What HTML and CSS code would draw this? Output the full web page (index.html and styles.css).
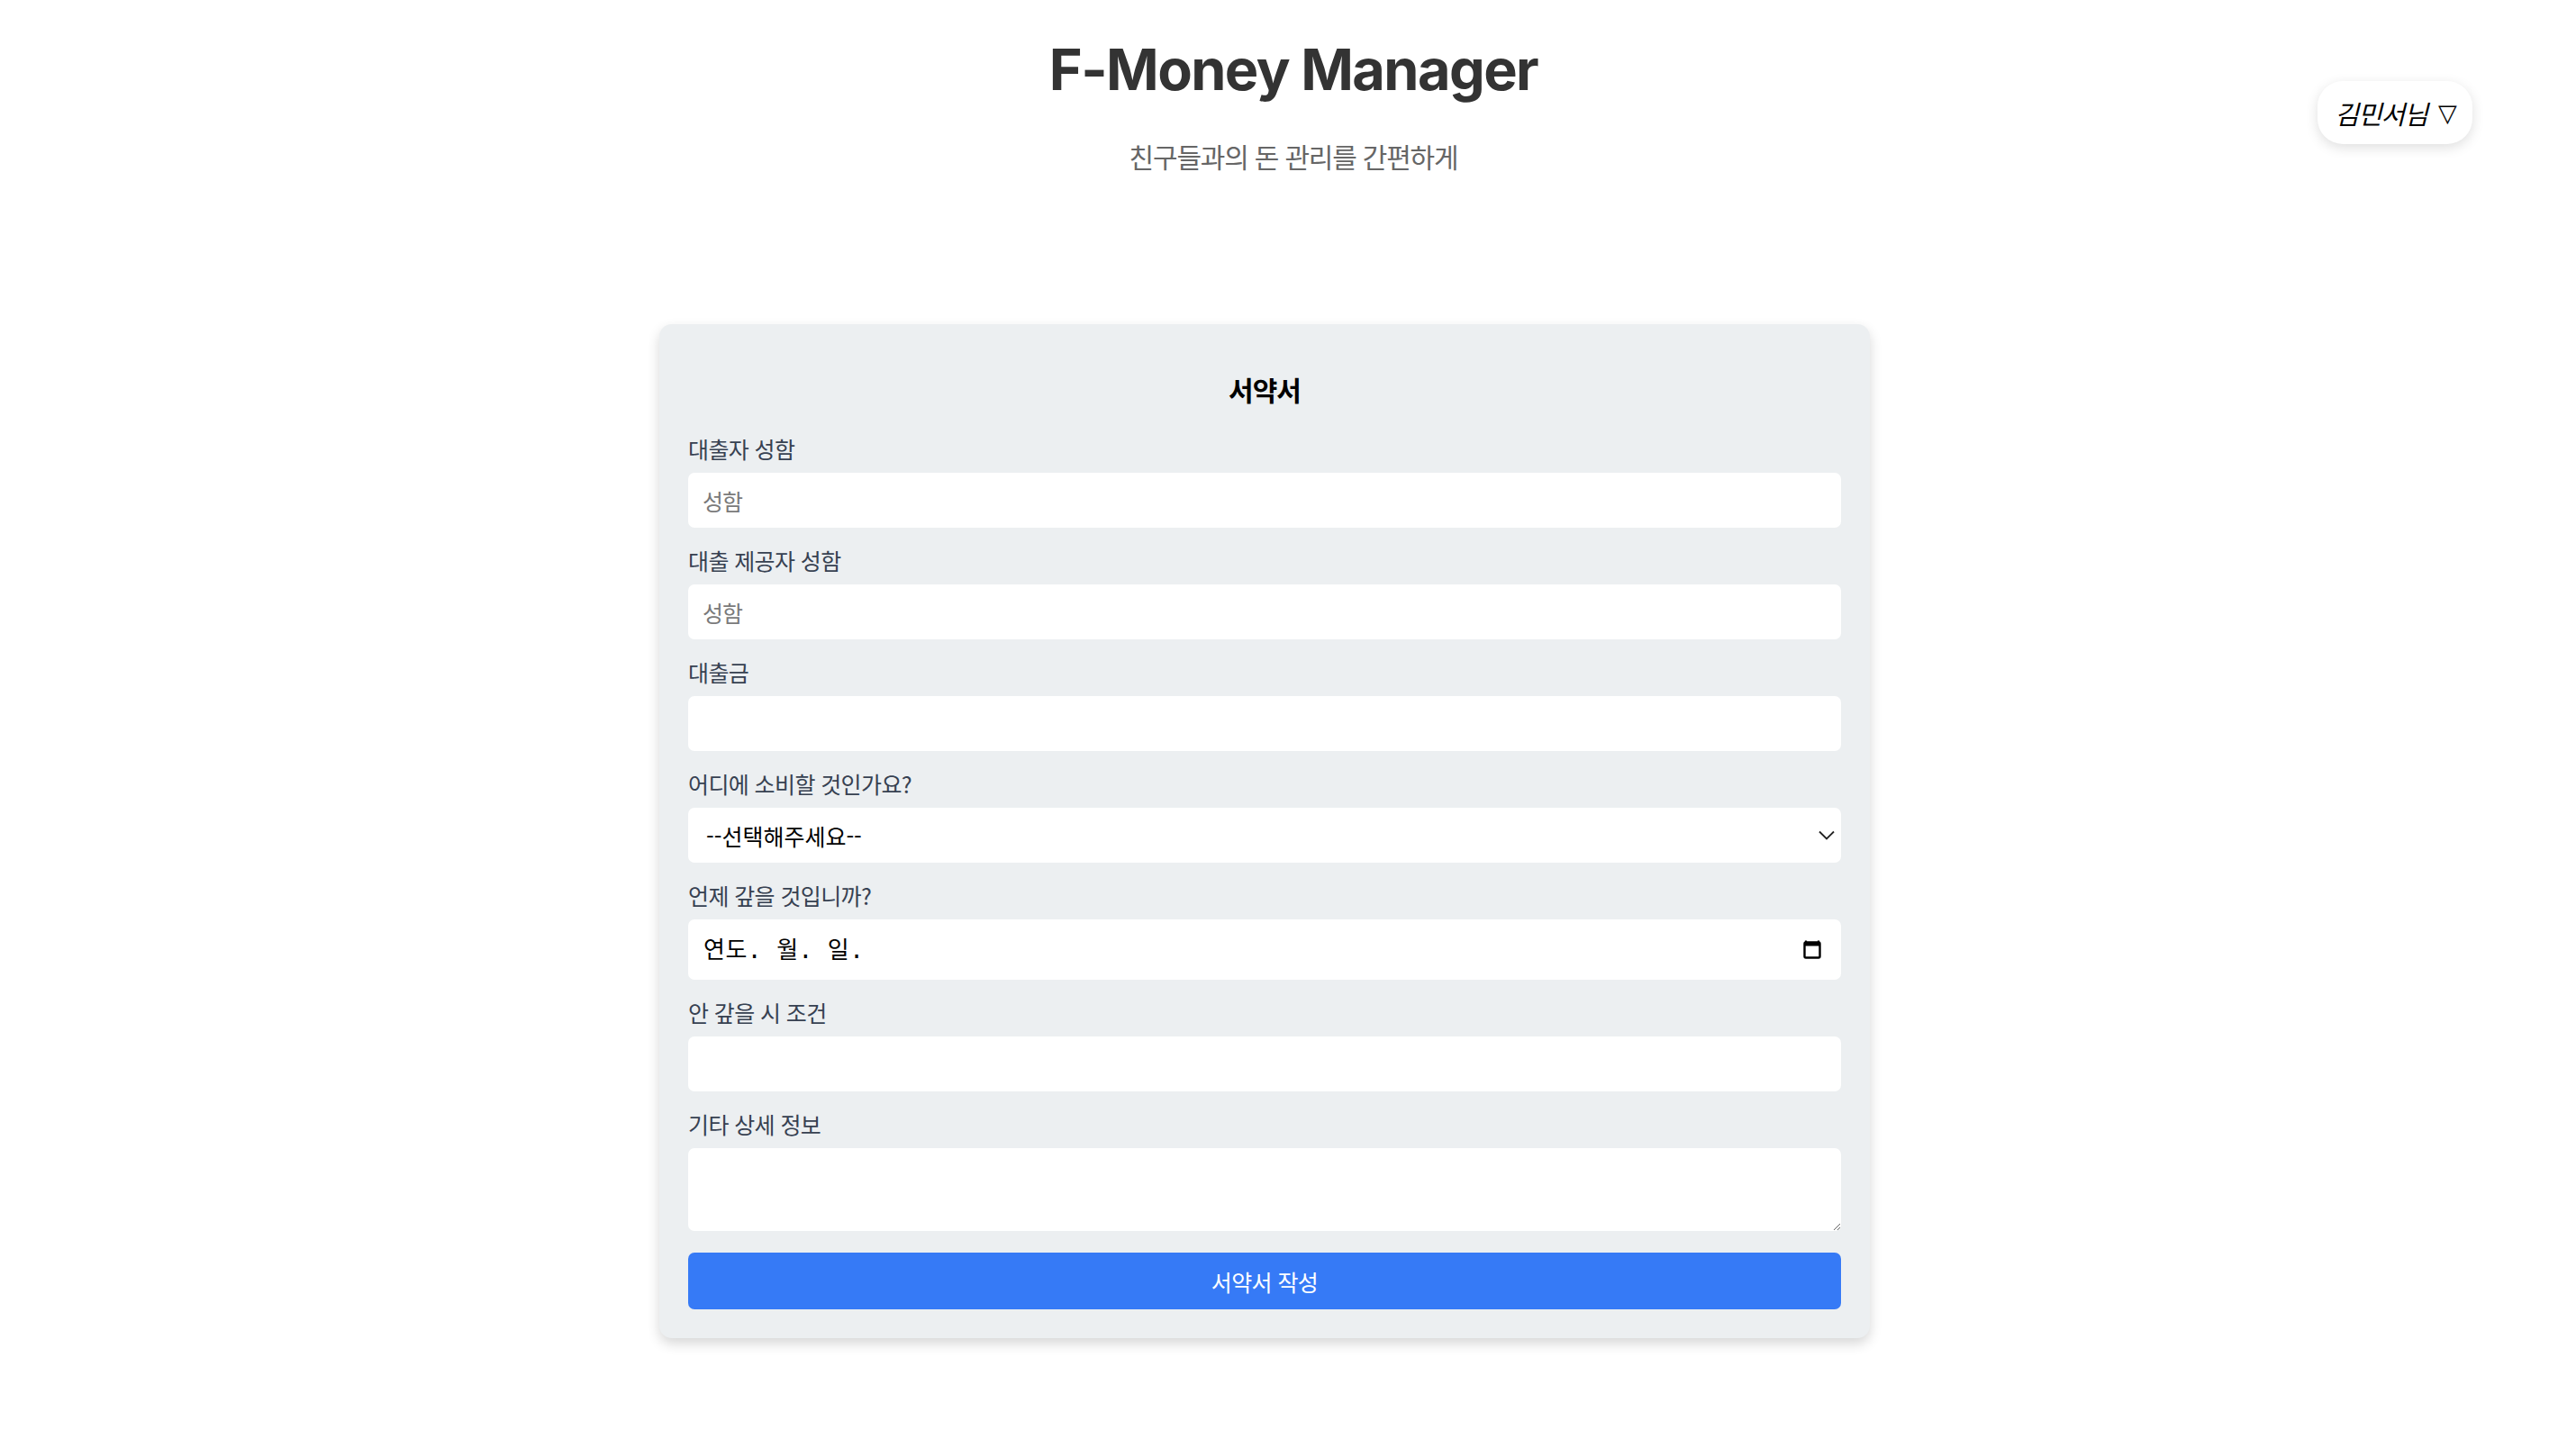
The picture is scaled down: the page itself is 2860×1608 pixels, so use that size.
FILE: index.html
```html
<!DOCTYPE html>
<html lang="ko">
<head>
<meta charset="utf-8">
<title>F-Money Manager</title>
<link rel="stylesheet" href="styles.css">
</head>
<body>
<header class="hero">
  <h1 class="hero-title">F-Money Manager</h1>
  <p class="hero-sub">친구들과의 돈 관리를 간편하게</p>
</header>
<button class="user-menu" type="button"><span>김민서님</span><span class="caret">▽</span></button>
<main class="main">
  <form class="card">
    <h2 class="card-title">서약서</h2>
    <label class="label">대출자 성함</label>
    <input class="field" type="text" placeholder="성함">
    <label class="label">대출 제공자 성함</label>
    <input class="field" type="text" placeholder="성함">
    <label class="label">대출금</label>
    <input class="field" type="text">
    <label class="label">어디에 소비할 것인가요?</label>
    <div class="select-wrap">
      <select class="field select">
        <option>--선택해주세요--</option>
      </select>
      <svg class="chev" width="18" height="11" viewBox="0 0 18 11"><path d="M1 1.5 L9 9.5 L17 1.5" fill="none" stroke="#222" stroke-width="1.8"/></svg>
    </div>
    <label class="label">언제 갚을 것입니까?</label>
    <div class="date-wrap">
      <input class="field date" type="text" placeholder="연도. 월. 일.">
      <svg class="cal" width="20" height="22" viewBox="0 0 20 22"><path d="M3 1.5 V4 M17 1.5 V4" stroke="#000" stroke-width="2.2"/><rect x="1.5" y="3.5" width="17" height="17" rx="1.5" fill="none" stroke="#000" stroke-width="2.4"/><rect x="1.5" y="3.5" width="17" height="4" fill="#000"/></svg>
    </div>
    <label class="label">안 갚을 시 조건</label>
    <input class="field" type="text">
    <label class="label">기타 상세 정보</label>
    <textarea class="field area"></textarea>
    <button class="submit" type="button">서약서 작성</button>
  </form>
</main>
</body>
</html>
```
FILE: styles.css
```css
html, body {
  margin: 0;
  padding: 0;
  background: #ffffff;
}
body {
  font-family: "Inter", "Noto Sans CJK KR", sans-serif;
  color: #222;
  position: relative;
  min-height: 1608px;
}
.hero {
  display: flex;
  flex-direction: column;
  align-items: center;
  padding-top: 39px;
  padding-left: 12px;
}
.hero-title {
  margin: 0;
  font-family: "Inter", "Noto Sans CJK KR", sans-serif;
  font-weight: 700;
  font-size: 63px;
  line-height: 76px;
  letter-spacing: -1.6px;
  color: #333333;
}
.hero-sub {
  margin: 35px 0 0;
  font-family: "Noto Sans CJK KR", sans-serif;
  font-size: 30px;
  line-height: 46px;
  letter-spacing: -1.2px;
  color: #666666;
}
.user-menu {
  position: absolute;
  top: 90px;
  right: 115px;
  width: 172px;
  height: 70px;
  border: none;
  border-radius: 28px;
  background: #ffffff;
  box-shadow: 0 4px 14px rgba(0, 0, 0, 0.13);
  font-family: "Noto Sans CJK KR", sans-serif;
  font-style: italic;
  font-size: 29px;
  letter-spacing: -1px;
  color: #000;
  padding: 0 0 0 2px;
  display: flex;
  align-items: center;
  justify-content: center;
  gap: 12px;
}
.caret {
  font-family: "DejaVu Sans", sans-serif;
  font-style: normal;
  font-size: 27px;
  font-weight: 700;
  letter-spacing: 0;
}
.main {
  display: flex;
  justify-content: center;
  margin-top: 164px;
}
.card {
  width: 1344px;
  box-sizing: border-box;
  margin-right: 52px;
  background: #eceff1;
  border-radius: 14px;
  padding: 32px 32px 32px;
  box-shadow: 0 6px 14px rgba(0, 0, 0, 0.16);
  display: flex;
  flex-direction: column;
}
.card-title {
  margin: 20px 0 29px;
  text-align: center;
  font-family: "Noto Sans CJK KR", sans-serif;
  font-weight: 700;
  font-size: 30px;
  line-height: 40px;
  letter-spacing: -1px;
  color: #000;
}
.label {
  display: block;
  font-family: "Noto Sans CJK KR", sans-serif;
  font-size: 25px;
  line-height: 35px;
  letter-spacing: -0.6px;
  color: #374151;
  margin-bottom: 9px;
}
.field {
  display: block;
  width: 100%;
  box-sizing: border-box;
  height: 61px;
  border: none;
  border-radius: 7px;
  background: #ffffff;
  padding: 0 16px;
  font-family: "Noto Sans CJK KR", sans-serif;
  font-size: 25px;
  letter-spacing: -1px;
  color: #111;
  margin: 0 0 19px;
  outline: none;
}
.field::placeholder {
  color: #7a7a7a;
}
.select-wrap,
.date-wrap {
  position: relative;
  margin-bottom: 19px;
}
.select-wrap .field,
.date-wrap .field {
  margin-bottom: 0;
}
.select {
  appearance: none;
  -webkit-appearance: none;
  padding-left: 20px;
  color: #000;
  font-size: 25px;
  letter-spacing: 0;
}
.chev {
  position: absolute;
  right: 7px;
  top: 25px;
  pointer-events: none;
}
.date {
  height: 67px;
  padding-left: 17px;
  font-family: "DejaVu Sans Mono", "Noto Sans CJK KR", monospace;
  font-size: 26px;
  letter-spacing: 0.5px;
}
.date::placeholder {
  color: #000;
}
.cal {
  position: absolute;
  right: 22px;
  top: 22px;
  pointer-events: none;
}
.area {
  height: 92px;
  padding: 12px 16px;
  resize: vertical;
  margin-bottom: 24px;
}
.submit {
  display: block;
  width: 100%;
  height: 63px;
  border: none;
  border-radius: 7px;
  background: #367af6;
  color: #ffffff;
  font-family: "Noto Sans CJK KR", sans-serif;
  font-size: 25px;
  letter-spacing: -0.6px;
}
```
